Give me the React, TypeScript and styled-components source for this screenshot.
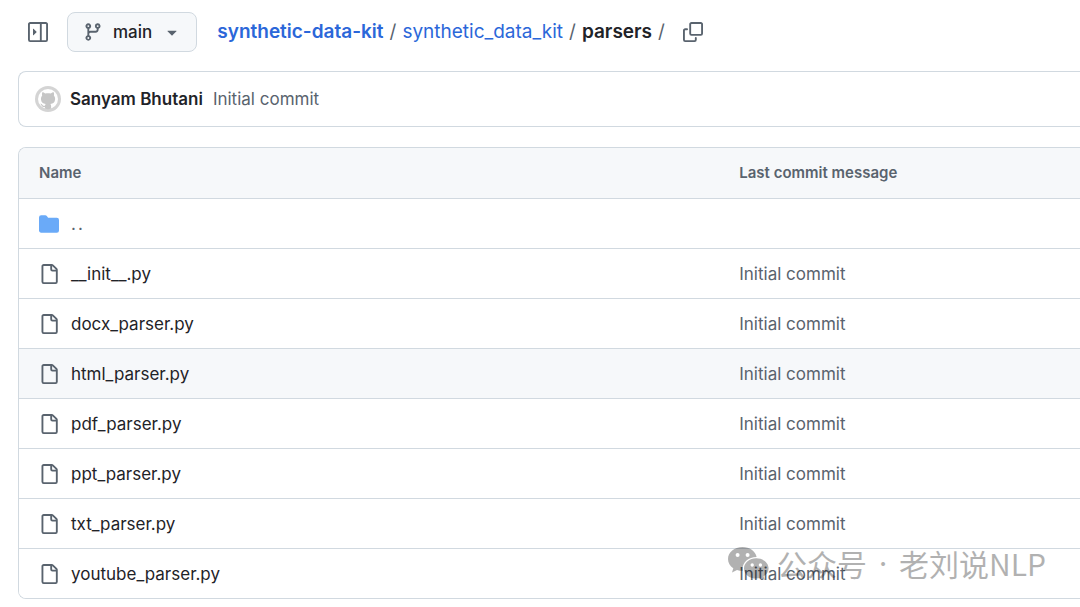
import React from 'react';
import styled, { createGlobalStyle } from 'styled-components';

const GlobalStyle = createGlobalStyle`
  *, *::before, *::after { box-sizing: border-box; }
  body {
    margin: 0;
    background: #fff;
    color: #1f2328;
    font: 400 17px/24px Inter, "Liberation Sans", sans-serif;
    overflow-x: hidden;
  }
  a { color: inherit; text-decoration: none; }
  button { font: inherit; color: inherit; cursor: pointer; }
`;

const paths = {
  sidebar:
    'M6.823 7.823a.25.25 0 0 1 0 .354l-2.396 2.396A.25.25 0 0 1 4 10.396V5.604a.25.25 0 0 1 .427-.177ZM1.75 0h12.5C15.216 0 16 .784 16 1.75v12.5A1.75 1.75 0 0 1 14.25 16H1.75A1.75 1.75 0 0 1 0 14.25V1.75C0 .784.784 0 1.75 0ZM1.5 1.75v12.5c0 .138.112.25.25.25H9.5v-13H1.75a.25.25 0 0 0-.25.25ZM11 14.5h3.25a.25.25 0 0 0 .25-.25V1.75a.25.25 0 0 0-.25-.25H11Z',
  branch:
    'M9.5 3.25a2.25 2.25 0 1 1 3 2.122V6A2.5 2.5 0 0 1 10 8.5H6a1 1 0 0 0-1 1v1.128a2.251 2.251 0 1 1-1.5 0V5.372a2.25 2.25 0 1 1 1.5 0v1.836A2.493 2.493 0 0 1 6 7h4a1 1 0 0 0 1-1v-.628A2.25 2.25 0 0 1 9.5 3.25Zm-6 0a.75.75 0 1 0 1.5 0 .75.75 0 0 0-1.5 0Zm8.25-.75a.75.75 0 1 0 0 1.5.75.75 0 0 0 0-1.5ZM4.25 12a.75.75 0 1 0 0 1.5.75.75 0 0 0 0-1.5Z',
  caret:
    'm4.427 7.427 3.396 3.396a.25.25 0 0 0 .354 0l3.396-3.396A.25.25 0 0 0 11.396 7H4.604a.25.25 0 0 0-.177.427Z',
  copy:
    'M0 6.75C0 5.784.784 5 1.75 5h1.5a.75.75 0 0 1 0 1.5h-1.5a.25.25 0 0 0-.25.25v7.5c0 .138.112.25.25.25h7.5a.25.25 0 0 0 .25-.25v-1.5a.75.75 0 0 1 1.5 0v1.5A1.75 1.75 0 0 1 9.25 16h-7.5A1.75 1.75 0 0 1 0 14.25ZM5 1.75C5 .784 5.784 0 6.75 0h7.5C15.216 0 16 .784 16 1.75v7.5A1.75 1.75 0 0 1 14.25 11h-7.5A1.75 1.75 0 0 1 5 9.25Zm1.75-.25a.25.25 0 0 0-.25.25v7.5c0 .138.112.25.25.25h7.5a.25.25 0 0 0 .25-.25v-7.5a.25.25 0 0 0-.25-.25Z',
  folder:
    'M1.75 1A1.75 1.75 0 0 0 0 2.75v10.5C0 14.216.784 15 1.75 15h12.5A1.75 1.75 0 0 0 16 13.25v-8.5A1.75 1.75 0 0 0 14.25 3H7.5a.25.25 0 0 1-.2-.1l-.9-1.2C6.07 1.26 5.55 1 5 1H1.75Z',
  file:
    'M2 1.75C2 .784 2.784 0 3.75 0h6.586c.464 0 .909.184 1.237.513l2.914 2.914c.329.328.513.773.513 1.237v9.586A1.75 1.75 0 0 1 13.25 16h-9.5A1.75 1.75 0 0 1 2 14.25Zm1.75-.25a.25.25 0 0 0-.25.25v12.5c0 .138.112.25.25.25h9.5a.25.25 0 0 0 .25-.25V6h-2.75A1.75 1.75 0 0 1 9 4.25V1.5Zm6.75.062V4.25c0 .138.112.25.25.25h2.688l-.011-.013-2.914-2.914-.013-.011Z',
  octocat:
    'M8 0C3.58 0 0 3.58 0 8c0 3.54 2.29 6.53 5.47 7.59.4.07.55-.17.55-.38 0-.19-.01-.82-.01-1.49-2.01.37-2.53-.49-2.69-.94-.09-.23-.48-.94-.82-1.13-.28-.15-.68-.52-.01-.53.63-.01 1.08.58 1.23.82.72 1.21 1.87.87 2.33.66.07-.52.28-.87.51-1.07-1.78-.2-3.64-.89-3.64-3.95 0-.87.31-1.59.82-2.15-.08-.2-.36-1.02.08-2.12 0 0 .67-.21 2.2.82.64-.18 1.32-.27 2-.27s1.36.09 2 .27c1.53-1.04 2.2-.82 2.2-.82.44 1.1.16 1.92.08 2.12.51.56.82 1.27.82 2.15 0 3.07-1.87 3.75-3.65 3.95.29.25.54.73.54 1.48 0 1.07-.01 1.93-.01 2.2 0 .21.15.46.55.38A8.01 8.01 0 0 0 16 8c0-4.42-3.58-8-8-8Z',
};

const IconSvg = styled.svg<{ $color: string }>`
  display: block;
  flex: none;
  width: 20px;
  height: 20px;
  fill: ${({ $color }) => $color};
`;

const Icon = ({ name, color = '#59636e' }: { name: keyof typeof paths; color?: string }) => (
  <IconSvg viewBox="0 0 16 16" $color={color} aria-hidden="true">
    <path fillRule="evenodd" d={paths[name]} />
  </IconSvg>
);

const Page = styled.main`
  position: relative;
  display: flex;
  flex-direction: column;
  gap: 20px;
  padding: 11px 0 8px 18px;
`;

const Toolbar = styled.header`
  display: flex;
  align-items: center;
  height: 40px;
  padding-top: 1px;
`;

const IconButton = styled.button`
  display: flex;
  padding: 10px;
  border: 0;
  background: none;
`;

const BranchButton = styled.button`
  display: flex;
  align-items: center;
  gap: 10px;
  height: 40px;
  margin: 0 20px 0 9px;
  padding: 0 14px 0 15px;
  border: 1px solid #d1d9e0;
  border-radius: 8px;
  background: #f6f8fa;
  font-weight: 500;
`;

const Crumbs = styled.nav`
  display: flex;
  gap: 6px;
  margin-right: 8px;
  font-size: 19px;
  white-space: nowrap;
`;

const Crumb = styled.a<{ $bold?: boolean }>`
  color: #2b67d9;
  font-weight: ${({ $bold }) => ($bold ? 600 : 400)};
`;

const Current = styled.span`
  font-weight: 600;
`;

const Slash = styled.span`
  color: #59636e;
`;

const CommitBar = styled.section`
  display: flex;
  align-items: center;
  height: 56px;
  padding: 0 16px;
  border: 1px solid #d1d9e0;
  border-right: 0;
  border-radius: 8px 0 0 8px;
`;

const Avatar = styled.svg`
  width: 26px;
  height: 26px;
  margin-right: 9px;
`;

const Author = styled.a`
  margin-right: 10px;
  font-weight: 600;
`;

const Message = styled.a`
  color: #59636e;
`;

const TableFrame = styled.section`
  border: 1px solid #d1d9e0;
  border-right: 0;
  border-radius: 8px 0 0 8px;
  overflow: hidden;
`;

const FileTable = styled.table`
  width: 100%;
  table-layout: fixed;
  border-collapse: separate;
  border-spacing: 0;
  text-align: left;
`;

const HeadCell = styled.th<{ $width?: string }>`
  width: ${({ $width }) => $width ?? 'auto'};
  height: 50px;
  padding: 0 20px;
  background: #f6f8fa;
  color: #59636e;
  font-size: 15px;
  font-weight: 600;
`;

const Row = styled.tr<{ $active?: boolean }>`
  background: ${({ $active }) => ($active ? '#f6f8fa' : '#fff')};
`;

const Cell = styled.td`
  height: 50px;
  padding: 0 20px;
  border-top: 1px solid #d1d9e0;
`;

const FileName = styled.div`
  display: flex;
  align-items: center;
  gap: 12px;
`;

const ParentLink = styled.a`
  color: #59636e;
  letter-spacing: 2px;
`;

const Watermark = styled.div`
  position: absolute;
  right: 34px;
  bottom: 24px;
  display: flex;
  align-items: center;
  gap: 8px;
  color: #000;
  opacity: 0.3;
  font: 400 30px/40px "Noto Sans CJK SC", sans-serif;
  white-space: nowrap;
  pointer-events: none;
`;

const Dot = styled.span`
  width: 16px;
  font-family: Inter, sans-serif;
  text-align: center;
`;

const WeChat = styled.svg`
  width: 41px;
  height: 34px;
`;

const files = [
  '__init__.py',
  'docx_parser.py',
  'html_parser.py',
  'pdf_parser.py',
  'ppt_parser.py',
  'txt_parser.py',
  'youtube_parser.py',
];

export default function App() {
  return (
    <>
      <GlobalStyle />
      <Page>
        <Toolbar>
          <IconButton aria-label="Expand file tree">
            <Icon name="sidebar" />
          </IconButton>
          <BranchButton>
            <Icon name="branch" />
            main
            <Icon name="caret" />
          </BranchButton>
          <Crumbs aria-label="Breadcrumb">
            <Crumb href="#repo" $bold>synthetic-data-kit</Crumb>
            <Slash>/</Slash>
            <Crumb href="#package">synthetic_data_kit</Crumb>
            <Slash>/</Slash>
            <Current>parsers</Current>
            <Slash>/</Slash>
          </Crumbs>
          <IconButton aria-label="Copy path">
            <Icon name="copy" />
          </IconButton>
        </Toolbar>

        <CommitBar>
          <Avatar viewBox="0 0 26 26" aria-hidden="true">
            <circle cx="13" cy="13" r="13" fill="#d4d4d4" />
            <circle cx="13" cy="13" r="10" fill="#fff" />
            <path
              fill="#c6c6c6"
              d="M7.300 6.200c1.200 0 2.400.700 3.200 1.400 1.600-.400 3.400-.400 5 0 .800-.700 2-1.400 3.200-1.400.500 1.200.400 2.500.200 3.200 1 1.200 1.400 2.500 1.200 4-.300 2.900-2 4.200-4.700 4.600.500.600.700 1.300.700 2.200v2.400c-2 .700-4.200.700-6.200 0v-1.700c-2 .300-2.900-.500-3.500-1.700-.300-.600-.700-1-1.200-1.400 1-.300 1.700.200 2.300 1.100.600.900 1.400 1.100 2.500.800.100-.700.300-1.300.700-1.700-2.700-.400-4.400-1.700-4.700-4.600-.200-1.500.200-2.800 1.200-4-.300-.700-.300-2 .100-3.200Z"
            />
          </Avatar>
          <Author href="#author">Sanyam Bhutani</Author>
          <Message href="#commit">Initial commit</Message>
        </CommitBar>

        <TableFrame>
          <FileTable>
            <thead>
              <tr>
                <HeadCell scope="col" $width="66%">Name</HeadCell>
                <HeadCell scope="col">Last commit message</HeadCell>
              </tr>
            </thead>
            <tbody>
              <Row>
                <Cell colSpan={2}>
                  <FileName>
                    <Icon name="folder" color="#6aaaf8" />
                    <ParentLink href="#parent">..</ParentLink>
                  </FileName>
                </Cell>
              </Row>
              {files.map((file) => (
                <Row key={file} $active={file === 'html_parser.py'}>
                  <Cell>
                    <FileName>
                      <Icon name="file" />
                      <a href={`#${file}`}>{file}</a>
                    </FileName>
                  </Cell>
                  <Cell>
                    <Message href="#commit">Initial commit</Message>
                  </Cell>
                </Row>
              ))}
            </tbody>
          </FileTable>
        </TableFrame>

        <Watermark>
          <WeChat viewBox="0 0 41 34" aria-hidden="true">
            <path
              fill="currentColor"
              fillRule="evenodd"
              d="M14.500 1C6.500 1 0 6.300 0 13c0 3.800 2 7 5.300 9.300L4 26.500l5-2.600c1.800.500 3.600.900 5.800.900C13.500 17.500 19.500 11 28.600 11 27.500 5 21.500 1 14.500 1ZM9.600 7a2 2 0 1 0 0 4 2 2 0 0 0 0-4Zm10 0a2 2 0 1 0 0 4 2 2 0 0 0 0-4ZM28.300 12.300C21.500 12.300 16 16.800 16 22.400s5.500 10.100 12.300 10.100c1.500 0 3-.300 4.400-.700l4 2.200-1.100-3.700c2.900-1.900 5-4.700 5-7.900 0-5.600-5.500-10.100-12.300-10.100ZM24.200 17.300a1.700 1.700 0 1 0 0 3.400 1.700 1.700 0 0 0 0-3.400Zm8.200 0a1.700 1.700 0 1 0 0 3.400 1.700 1.700 0 0 0 0-3.400Z"
            />
          </WeChat>
          <span>公众号</span>
          <Dot>·</Dot>
          <span>老刘说NLP</span>
        </Watermark>
      </Page>
    </>
  );
}
